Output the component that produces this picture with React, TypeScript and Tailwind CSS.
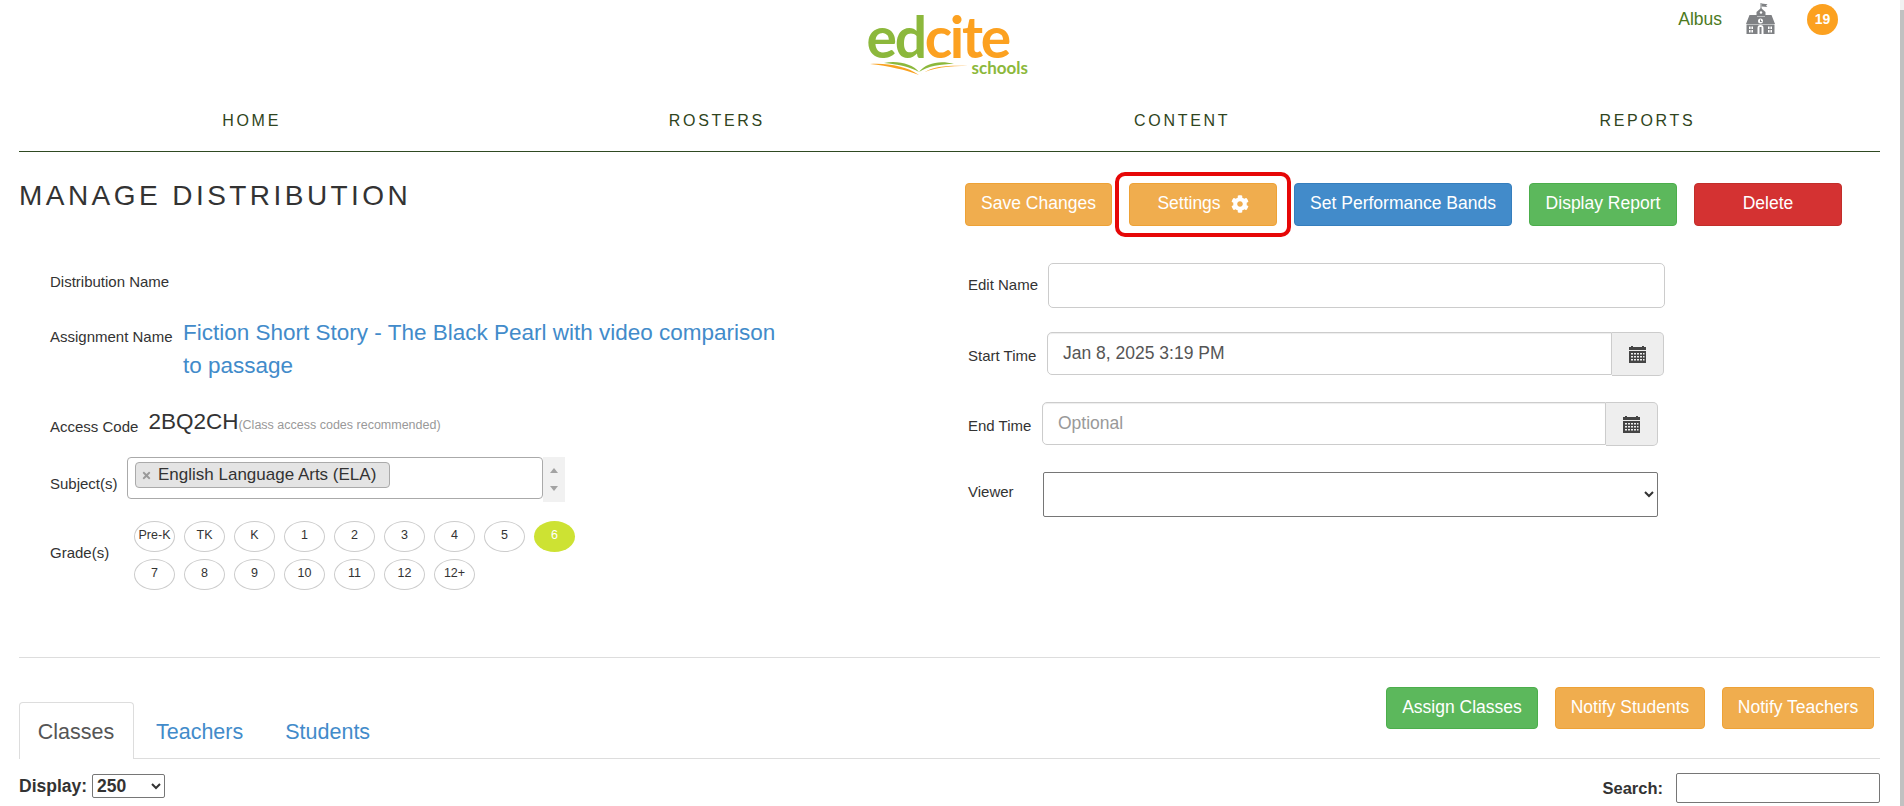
import { FaCog, FaTimes } from 'react-icons/fa'

const grades = [
  ['Pre-K', 'TK', 'K', '1', '2', '3', '4', '5', '6'],
  ['7', '8', '9', '10', '11', '12', '12+'],
]

const topActions = [
  { label: 'Save Changes', width: 'w-[147px]', color: 'bg-[#f0ad4e] border-[#eea236]' },
  { label: 'Settings', width: 'w-[148px]', color: 'bg-[#f0ad4e] border-[#eea236]', gear: true },
  { label: 'Set Performance Bands', width: 'w-[218px]', color: 'bg-[#428bca] border-[#357ebd]' },
  { label: 'Display Report', width: 'w-[148px]', color: 'bg-[#5cb85c] border-[#4cae4c]' },
  { label: 'Delete', width: 'w-[148px]', color: 'bg-[#d43232] border-[#c12e2a]' },
]

function CalendarIcon() {
  return (
    <svg width="17" height="18" viewBox="0 0 17 18" fill="#444">
      <path d="M2 1h2v1h9V1h2v1h2v3H0V2h2z" />
      <path
        fillRule="evenodd"
        d="M0 6h17v12H0zM2 8v1.5h2V8zm3 0v1.5h2V8zm3 0v1.5h2V8zm3 0v1.5h2V8zm3 0v1.5h1.5V8zM2 11v1.500h2V11zm3 0v1.500h2V11zm3 0v1.500h2V11zm3 0v1.500h2V11zm3 0v1.500h1.500V11zM2 14v1.500h2V14zm3 0v1.500h2V14zm3 0v1.500h2V14zm3 0v1.500h2V14zm3 0v1.500h1.500V14z"
      />
    </svg>
  )
}

function SchoolIcon() {
  return (
    <svg width="29" height="31" viewBox="0 0 29 31" fill="#7f8184">
      {/* flag and pole */}
      <path d="M14.500 0h1v6h-1z" />
      <path d="M15.500 0.500l6 .8-1.500 1.400 1.500 1.300-6 -.6z" />
      {/* tower */}
      <path d="M15 5l4.500 4v4h-9V9z" />
      {/* main roof */}
      <path d="M3.500 12h7.500v1.500h8V12h6.500L29 21H0z" />
      {/* body */}
      <path
        fillRule="evenodd"
        d="M0.500 21.500h28V31H0.500zM3 23.500v2.500h1.600v-2.500zm2.400 0v2.500H7v-2.500zM3 27v2.500h1.600V27zm2.400 0v2.500H7V27zM22 23.500v2.500h1.600v-2.500zm2.400 0v2.500H26v-2.500zM22 27v2.500h1.600V27zm2.400 0v2.500H26V27z"
      />
      <circle cx="14.500" cy="18" r="2.500" fill="#fff" />
      <path d="M14 16.500h1v1.700h1.200v.8H14z" />
      <path fill="#fff" d="M11.500 31v-6a3 3 0 0 1 6 0v6h-2v-7h-2v7z" />
      <circle cx="15" cy="9.500" r="1.200" fill="#fff" />
    </svg>
  )
}

function Logo() {
  return (
    <div className="relative h-[88px] w-[164px]">
      <div className="absolute left-[-3px] top-[5px] font-['Lato',sans-serif] text-[57px] font-bold leading-[46px] tracking-[-2.300px]">
        <span className="text-[#8cb83c]">ed</span>
        <span className="text-[#fca120]">cite</span>
      </div>
      <svg className="absolute left-0 top-[54px]" width="100" height="14" viewBox="0 0 100 14">
        <path d="M0 2c18-1 36 2 49 11C37 8 18 4 0 2z" fill="#f9a11f" />
        <path d="M98 4c-18 0-36 1-49 9 8-4 10-6 20-8 9-1.500 20-1.500 29-1z" fill="#f9a11f" />
        <path d="M14 1C27-2 43 2 49 10 41 5 27 2 14 1z" fill="#8cb83c" />
        <path d="M84 2C70-2 56 1 49 10c9-6 22-8 35-8z" fill="#8cb83c" />
      </svg>
      <span className="absolute left-[102px] top-[52px] font-['Lato',sans-serif] text-[17px] font-bold leading-4 text-[#8cb83c]">schools</span>
    </div>
  )
}

function Label({ children, className = '' }: { children: string; className?: string }) {
  return <span className={`text-[15px] leading-5 text-[#333] ${className}`}>{children}</span>
}

function DateField({ value, placeholder, width }: { value?: string; placeholder?: string; width: string }) {
  return (
    <div className={`flex h-[44px] ${width}`}>
      <div className="flex h-[43px] min-w-0 flex-1 items-center rounded-l-[5px] border border-[#ccc] px-[15px] text-[17.500px] shadow-[inset_0_1px_1px_rgba(0,0,0,0.075)]">
        {value ? <span className="text-[#555]">{value}</span> : <span className="text-[#999]">{placeholder}</span>}
      </div>
      <div className="flex w-[52px] items-center justify-center rounded-r-[5px] border border-l-0 border-[#ccc] bg-[#eee]">
        <CalendarIcon />
      </div>
    </div>
  )
}

export default function App() {
  return (
    <div className="relative h-[806px] overflow-hidden bg-white font-['Liberation_Sans',Arial,sans-serif] text-[#333]">
      <div className="absolute right-0 top-0 h-full w-[4px] bg-[#f1f1f1]">
        <div className="mt-[10px] h-full w-full bg-[#c1c1c1]" />
      </div>

      <header className="relative mx-[19px] h-[152px] w-[1861px] border-b border-[#2f4a22]">
        <div className="flex justify-center pl-[4px] pt-[8px]">
          <Logo />
        </div>
        <div className="absolute right-[42px] top-[3px] flex items-start">
          <span className="mr-[24px] mt-[6px] text-[17.500px] leading-5 text-[#4c7a1e]">Albus</span>
          <div className="mr-[32px]"><SchoolIcon /></div>
          <span className="mt-[1px] flex h-[31px] w-[31px] items-center justify-center rounded-full bg-[#fca120] text-[14px] font-bold text-white">19</span>
        </div>
        <nav className="absolute left-0 right-0 top-[111px] grid grid-cols-4 text-center text-[16px] leading-5 tracking-[2.700px] text-[#2f4420]">
          <span>HOME</span>
          <span>ROSTERS</span>
          <span>CONTENT</span>
          <span>REPORTS</span>
        </nav>
      </header>

      <main className="grid grid-cols-[946px_1fr] pl-[19px]">
        <section>
          <h1 className="mt-[29px] text-[28px] font-normal leading-[30px] tracking-[3.450px] text-[#333]">MANAGE DISTRIBUTION</h1>
          <div className="ml-[31px] mt-[59px]">
            <Label>Distribution Name</Label>
          </div>
          <div className="ml-[31px] mt-[22px] flex items-start">
            <Label className="mt-[11px] w-[133px] shrink-0">Assignment Name</Label>
            <a className="w-[610px] text-[22.500px] leading-[33px] text-[#428bca]">
              Fiction Short Story - The Black Pearl with video comparison to passage
            </a>
          </div>
          <div className="ml-[31px] mt-[25px] flex h-[30px] items-center">
            <Label className="mt-[9px]">Access Code</Label>
            <span className="ml-[10px] text-[22.500px] leading-[30px] text-[#333]">2BQ2CH</span>
            <span className="mt-[7px] text-[12.500px] text-[#999]">(Class access codes recommended)</span>
          </div>
          <div className="ml-[31px] mt-[20px] flex items-start">
            <Label className="mt-[17px] w-[77px] shrink-0">Subject(s)</Label>
            <div className="h-[42px] w-[416px] rounded-[4px] border border-[#aaa] pl-[7px] pt-[4px]">
              <span className="inline-flex h-[26px] items-center rounded-[4px] border border-[#aaa] bg-[#e4e4e4] pl-[5px] pr-[13px] text-[17px] text-[#333]">
                <FaTimes className="mr-[6px] text-[11px] text-[#999]" />
                English Language Arts (ELA)
              </span>
            </div>
            <div className="flex h-[45px] w-[22px] flex-col items-center justify-around bg-[#f1f1f1] py-[4px]">
              <span className="h-0 w-0 border-x-[4px] border-b-[5px] border-x-transparent border-b-[#a3a3a3]" />
              <span className="h-0 w-0 border-x-[4px] border-t-[5px] border-x-transparent border-t-[#a3a3a3]" />
            </div>
          </div>
          <div className="ml-[31px] mt-[19px] flex items-center">
            <Label className="w-[84px] shrink-0 pb-[6px]">Grade(s)</Label>
            <div className="flex flex-col gap-[7px]">
              {grades.map((row, i) => (
                <div key={i} className="flex gap-[9px]">
                  {row.map((g) => (
                    <span
                      key={g}
                      className={
                        g === '6'
                          ? 'flex h-[31px] w-[41px] items-center justify-center rounded-[50%] bg-[#cde233] pb-[3px] text-[12.500px] text-white'
                          : 'flex h-[31px] w-[41px] items-center justify-center rounded-[50%] border border-[#ccc] pb-[3px] text-[12.500px] text-[#333]'
                      }
                    >
                      {g}
                    </span>
                  ))}
                </div>
              ))}
            </div>
          </div>
        </section>

        <section>
          <div className="mt-[31px] flex gap-[17px]">
            {topActions.map((b) => (
              <div key={b.label} className="relative">
                <button className={`flex h-[43px] items-center justify-center gap-[10px] rounded-[4px] border pb-[2px] text-[17.500px] text-white ${b.width} ${b.color}`}>
                  {b.label}
                  {b.gear ? <FaCog className="text-[18px]" /> : null}
                </button>
                {b.gear ? (
                  <div className="absolute -inset-x-[14px] -inset-y-[11px] rounded-[10px] border-[4px] border-[#e60707]" />
                ) : null}
              </div>
            ))}
          </div>
          <div className="ml-[3px] mt-[36px] flex h-[46px] items-center">
            <Label className="w-[80px] shrink-0">Edit Name</Label>
            <div className="h-[45px] w-[617px] rounded-[5px] border border-[#ccc]" />
          </div>
          <div className="ml-[3px] mt-[24px] flex items-center">
            <Label className="w-[79px] shrink-0 pt-[3px]">Start Time</Label>
            <DateField value="Jan 8, 2025 3:19 PM" width="w-[617px]" />
          </div>
          <div className="ml-[3px] mt-[26px] flex items-center">
            <Label className="w-[74px] shrink-0 pt-[3px]">End Time</Label>
            <DateField placeholder="Optional" width="w-[616px]" />
          </div>
          <div className="ml-[3px] mt-[26px] flex items-center">
            <Label className="w-[75px] shrink-0 pb-[5px]">Viewer</Label>
            <select className="h-[45px] w-[615px] rounded-[2px] border border-[#767676] bg-white text-[16px]">
              <option></option>
            </select>
          </div>
        </section>
      </main>

      <div className="absolute inset-x-[19px] top-[657px] h-px w-[1861px] bg-[#ddd]" />

      <div className="absolute bottom-0 left-[19px] top-[658px] w-[1861px]">
        <div className="relative h-[101px] border-b border-[#ddd]">
          <div className="absolute bottom-[-1px] left-0 flex items-stretch text-[21.500px]">
            <span className="flex h-[57px] w-[115px] items-center justify-center rounded-t-[4px] border border-b-0 border-[#ddd] bg-white pr-[1px] pt-[3px] text-[#555]">Classes</span>
            <span className="ml-[2px] flex items-center px-[20px] pt-[3px] text-[#428bca]">Teachers</span>
            <span className="ml-[2px] flex items-center px-[20px] pt-[3px] text-[#428bca]">Students</span>
          </div>
          <div className="absolute right-[6px] top-[29px] flex gap-[17px] text-[17.500px] text-white">
            <button className="h-[42px] w-[152px] rounded-[4px] border border-[#4cae4c] bg-[#5cb85c] pb-[2px]">Assign Classes</button>
            <button className="h-[42px] w-[150px] rounded-[4px] border border-[#eea236] bg-[#f0ad4e] pb-[2px]">Notify Students</button>
            <button className="h-[42px] w-[152px] rounded-[4px] border border-[#eea236] bg-[#f0ad4e] pb-[2px]">Notify Teachers</button>
          </div>
        </div>
        <div className="mt-[14px] flex items-start justify-between">
          <div className="flex items-center">
            <span className="text-[17.500px] font-bold text-[#333]">Display:</span>
            <select className="ml-[5px] h-[24px] w-[73px] rounded-[2px] border border-[#767676] bg-white text-[17.500px] font-bold text-[#333]">
              <option>250</option>
            </select>
          </div>
          <div className="flex items-center">
            <span className="text-[16.500px] font-bold text-[#333]">Search:</span>
            <div className="ml-[13px] h-[30px] w-[204px] rounded-[2px] border border-[#767676]" />
          </div>
        </div>
      </div>
    </div>
  )
}
